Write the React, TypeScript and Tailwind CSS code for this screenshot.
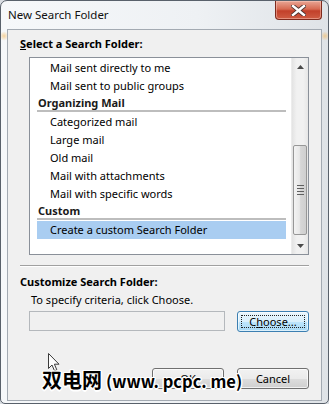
const rowText = "h-[18px] pl-[13px] leading-[18px] whitespace-nowrap";

function Header({ label }: { label: string }) {
	return (
		<div className="h-[18px]">
			<div className="h-[15px] pl-[1px] leading-[15px] font-bold text-[#1a1a1a] whitespace-nowrap">{label}</div>
			<div className="h-[2px] bg-[#bdbdbd]" />
		</div>
	);
}

function WinButton({ children, focused }: { children: React.ReactNode; focused?: boolean }) {
	if (focused) {
		return (
			<div className="relative flex h-[21px] w-[72px] items-center justify-center rounded-[3px] border border-[#3c7fb1] bg-[linear-gradient(180deg,#eaf6fd_0%,#d9f0fc_50%,#bee6fd_51%,#a7d9f5_100%)] shadow-[inset_0_0_0_1px_rgba(255,255,255,0.6)]">
				<div className="absolute inset-[3px] border border-dotted border-[#222]" />
				<span className="leading-[15px]">{children}</span>
			</div>
		);
	}
	return (
		<div className="flex h-[21px] w-[72px] items-center justify-center rounded-[3px] border border-[#707070] bg-[linear-gradient(180deg,#f2f2f2_0%,#ebebeb_50%,#dddddd_51%,#cfcfcf_100%)] shadow-[inset_0_0_0_1px_rgba(255,255,255,0.7)]">
			<span className="leading-[15px]">{children}</span>
		</div>
	);
}

function ScrollBar() {
	return (
		<div className="flex w-[17px] flex-col bg-[linear-gradient(90deg,#e3e3e3_0%,#f1f1f1_30%,#f1f1f1_70%,#e6e6e6_100%)] border-l border-[#ececec]">
			{/* up */}
			<div className="flex h-[17px] items-center justify-center">
				<svg width="7" height="4" viewBox="0 0 7 4">
					<path d="M3.5 0 L7 4 L0 4 Z" fill="#4a4a4a" />
				</svg>
			</div>
			<div className="flex-1 pt-[70px]">
				<div className="mx-[1px] flex h-[90px] flex-col items-center justify-center gap-[2px] rounded-[2px] border border-[#979797] bg-[linear-gradient(90deg,#f3f3f3_0%,#e8e8e8_45%,#d6d6d6_55%,#cfcfcf_100%)]">
					<div className="h-px w-[7px] bg-[#5f5f5f]" />
					<div className="h-px w-[7px] bg-[#5f5f5f]" />
					<div className="h-px w-[7px] bg-[#5f5f5f]" />
					<div className="h-px w-[7px] bg-[#5f5f5f]" />
				</div>
			</div>
			{/* down */}
			<div className="flex h-[17px] items-center justify-center">
				<svg width="7" height="4" viewBox="0 0 7 4">
					<path d="M0 0 L7 0 L3.5 4 Z" fill="#4a4a4a" />
				</svg>
			</div>
		</div>
	);
}

export default function App() {
	return (
		<div className="relative h-[404px] w-[329px] overflow-hidden bg-[#d9dde2] font-['Noto_Sans',sans-serif] text-[11px] text-black">
			<div className="flex h-full flex-col rounded-t-[7px] rounded-b-[5px] border border-[#59616b] bg-[linear-gradient(90deg,#f6f8fa_0%,#eef1f4_60%,#dfe3e7_100%)] px-[6px] pb-[2px]">
				{/* title bar */}
				<div className="flex h-[28px] items-start justify-between">
					<div className="mt-[6px] pl-[1px] text-[11.5px] leading-[16px] text-[#111]">New Search Folder</div>
					<div className="flex h-[19px] w-[47px] items-center justify-center rounded-b-[4px] border border-t-0 border-[#7e2a1d] bg-[linear-gradient(180deg,#e9a695_0%,#d76a52_45%,#c2402a_55%,#cf5c43_100%)] shadow-[inset_0_0_0_1px_rgba(255,210,200,0.45)]">
						<svg width="15" height="11" viewBox="0 0 15 11">
							<path d="M2 1 L13 10 M13 1 L2 10" stroke="#4a3330" strokeWidth="4.2" strokeLinecap="square" />
							<path d="M2 1 L13 10 M13 1 L2 10" stroke="#ffffff" strokeWidth="2.4" strokeLinecap="square" />
						</svg>
					</div>
				</div>

				{/* client area */}
				<div className="relative flex flex-1 flex-col border border-[#a3aab2] bg-[#f0f0f0]">
					<div className="pointer-events-none absolute -left-[7px] top-0 h-[12px] w-[6px] bg-[radial-gradient(circle,rgba(245,180,80,0.55),transparent_70%)]" />
					<div className="pointer-events-none absolute -right-[7px] top-0 h-[12px] w-[6px] bg-[radial-gradient(circle,rgba(245,180,80,0.55),transparent_70%)]" />

					<div className="mt-[6px] pl-[12px] leading-[15px] font-bold">
						<span className="underline">S</span>elect a Search Folder:
					</div>

					{/* list */}
					<div className="ml-[21px] mt-[6px] flex h-[198px] w-[280px] border border-[#8a9099] bg-white">
						<div className="flex-1 pl-[7px] pr-[5px] pt-[1px]">
							<div className={rowText}>Mail sent directly to me</div>
							<div className={rowText}>Mail sent to public groups</div>
							<Header label="Organizing Mail" />
							<div className={rowText}>Categorized mail</div>
							<div className={rowText}>Large mail</div>
							<div className={rowText}>Old mail</div>
							<div className={rowText}>Mail with attachments</div>
							<div className={rowText}>Mail with specific words</div>
							<Header label="Custom" />
							<div className={rowText + " bg-[#a9cdf1]"}>Create a custom Search Folder</div>
						</div>
						<ScrollBar />
					</div>

					<div className="ml-[12px] mt-[10px] w-[289px] border-t border-b border-t-[#a0a0a0] border-b-white" />

					<div className="mt-[7px] pl-[12px] leading-[15px] font-bold">Customize Search Folder:</div>
					<div className="mt-[3px] pl-[23px] leading-[15px]">To specify criteria, click Choose.</div>

					<div className="ml-[21px] mt-[4px] flex gap-[12px]">
						<div className="h-[20px] w-[196px] border border-[#b4b8bc] bg-[#f0f0f0]" />
						<WinButton focused>
							C<span className="underline">h</span>oose...
						</WinButton>
					</div>

					<div className="mb-[11px] mt-auto flex justify-end gap-[13px] pr-[12px]">
						<WinButton>OK</WinButton>
						<WinButton>Cancel</WinButton>
					</div>
				</div>
			</div>

			{/* mouse pointer */}
			<svg className="absolute left-[48px] top-[353px]" width="13" height="19" viewBox="0 0 13 19">
				<path d="M0.5 0.5 L0.5 15.5 L4 12 L6.5 17.8 L8.8 16.8 L6.4 11.2 L11 11.2 Z" fill="#ffffff" fillOpacity="0.85" stroke="#3a3a3a" strokeWidth="1" />
			</svg>

			{/* watermark */}
			<div className="absolute left-[42px] top-[367px] flex items-baseline whitespace-nowrap font-['Noto_Sans_CJK_SC',sans-serif] font-bold leading-[26px] text-black [text-shadow:-1.5px_0_#fff,1.5px_0_#fff,0_-1.5px_#fff,0_1.5px_#fff,-1px_-1px_#fff,1px_1px_#fff,-1px_1px_#fff,1px_-1px_#fff]">
				<span className="text-[20px]">双电网</span>
				<span className="ml-[4px] text-[16.5px]">(www. pcpc. me)</span>
			</div>
		</div>
	);
}
